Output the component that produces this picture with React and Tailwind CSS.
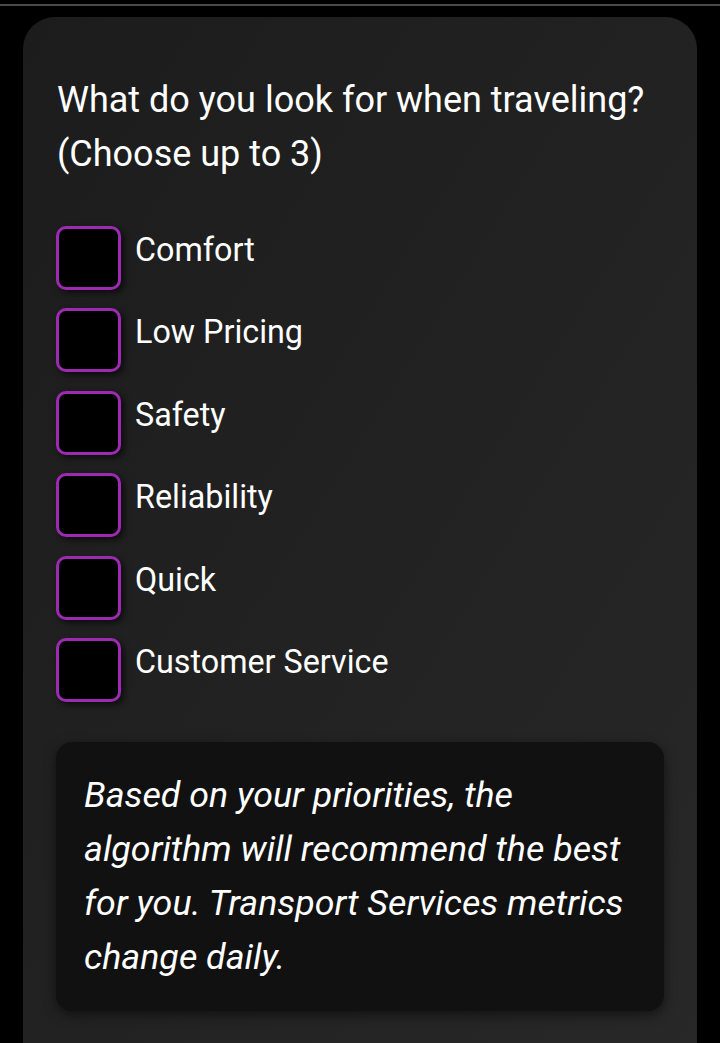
import React from "react";

const options = [
  "Comfort",
  "Low Pricing",
  "Safety",
  "Reliability",
  "Quick",
  "Customer Service",
];

export default function App() {
  return (
    <div
      className="min-h-[1043px] bg-black overflow-hidden"
      style={{ fontFamily: "Roboto, 'Noto Sans', sans-serif" }}
    >
      <div className="h-[4px]" />
      <div className="h-[2px] bg-[#4a4a4a]" />
      <div className="mt-[11px] ml-[23px] w-[674px] rounded-[32px] bg-linear-to-br from-[#1c1c1c] to-[#282828] px-[33px] pt-[56px] pb-[80px]">
        <h1 className="text-[36px] leading-[54px] text-white font-normal pl-[1px]">
          What do you look for when traveling?
          <br />
          (Choose up to 3)
        </h1>
        <div className="mt-[45px] flex flex-col gap-[18.4px]">
          {options.map((o) => (
            <label key={o} className="flex items-start gap-[14px]">
              <span className="block w-[65px] h-[64px] rounded-[10px] border-[3.5px] border-[#9d2ab2] bg-black shadow-[3px_3px_6px_rgba(0,0,0,0.6)] shrink-0" />
              <span className="mt-[5px] text-[32.3px] leading-[38px] text-white">
                {o}
              </span>
            </label>
          ))}
        </div>
        <div className="mt-[40px] rounded-[16px] bg-[#111111] pl-[28px] pr-[24px] pt-[26px] pb-[27px] shadow-[0_4px_12px_rgba(0,0,0,0.5)]">
          <p className="italic text-[35.8px] leading-[54px] text-white">
            Based on your priorities, the algorithm will recommend the best
            for you. Transport Services metrics change daily.
          </p>
        </div>
      </div>
    </div>
  );
}
